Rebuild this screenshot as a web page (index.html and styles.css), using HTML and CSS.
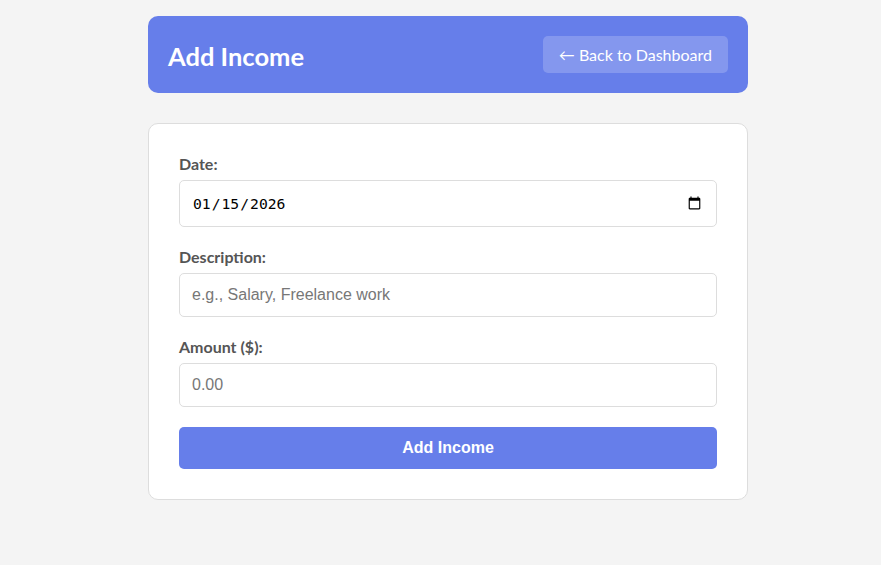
FILE: index.html
```html
<!DOCTYPE html>
<html>
<head>
<meta charset="utf-8">
<link rel="stylesheet" href="styles.css">
</head>
<body>
<div class="container">
  <header class="header">
    <h1 class="title">Add Income</h1>
    <a class="back-btn" href="#">← Back to Dashboard</a>
  </header>
  <form class="card">
    <div class="form-group">
      <label class="label">Date:</label>
      <input class="input input-date" type="date" value="2026-01-15">
    </div>
    <div class="form-group">
      <label class="label">Description:</label>
      <input class="input" type="text" placeholder="e.g., Salary, Freelance work">
    </div>
    <div class="form-group">
      <label class="label">Amount ($):</label>
      <input class="input" type="text" placeholder="0.00">
    </div>
    <button class="submit" type="button">Add Income</button>
  </form>
</div>
</body>
</html>
```
FILE: styles.css
```css
html, body {
  margin: 0;
  background: #f4f4f4;
}
body {
  padding: 16px 0 0 15px;
  font-family: Lato, "Open Sans", sans-serif;
  color: #333;
}
.container {
  width: 600px;
  margin: 0 auto;
}
.header {
  background: #667eea;
  color: #fff;
  border-radius: 10px;
  padding: 20px;
  display: flex;
  align-items: center;
  justify-content: space-between;
  height: 77px;
  box-sizing: border-box;
}
.title {
  margin: 2px 0 0;
  font-size: 25.5px;
  font-weight: 700;
}
.back-btn {
  color: #fff;
  text-decoration: none;
  background: rgba(255, 255, 255, 0.2);
  border-radius: 5px;
  font-size: 16px;
  height: 37px;
  box-sizing: border-box;
  padding: 0 16px;
  display: flex;
  align-items: center;
}
.card {
  display: block;
  margin-top: 30px;
  background: #fff;
  border: 1px solid #ddd;
  border-radius: 10px;
  padding: 30px;
}
.form-group {
  margin-bottom: 20px;
}
.label {
  display: block;
  font-size: 16px;
  line-height: 20px;
  font-weight: 700;
  color: #555;
  margin-bottom: 6px;
}
.input {
  display: block;
  width: 100%;
  box-sizing: border-box;
  padding: 12px;
  border: 1px solid #ddd;
  border-radius: 5px;
  font-size: 16px;
  font-family: "Liberation Sans", Arial, sans-serif;
  color: #333;
  height: 44px;
}
.input::placeholder {
  color: #777;
}
.input-date {
  font-family: "DejaVu Sans Mono", monospace;
  font-size: 14.7px;
  height: 47px;
  color: #000;
}
.submit {
  display: block;
  width: 100%;
  height: 42px;
  border: none;
  border-radius: 5px;
  background: #667eea;
  color: #fff;
  font-family: "Liberation Sans", Arial, sans-serif;
  font-size: 16px;
  font-weight: 700;
}
```
